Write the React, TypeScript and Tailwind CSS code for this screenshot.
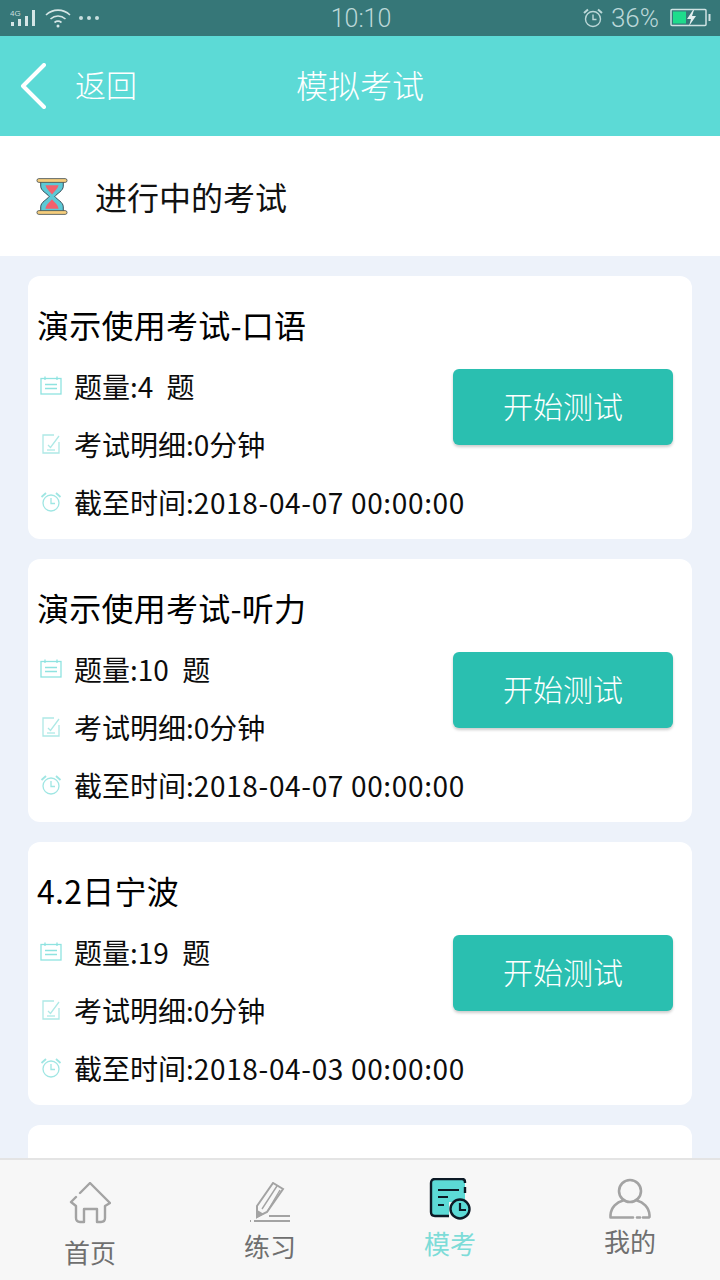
import React from 'react'

const exams = [
  { title: '演示使用考试-口语', count: 4, deadline: '2018-04-07 00:00:00' },
  { title: '演示使用考试-听力', count: 10, deadline: '2018-04-07 00:00:00' },
  { title: '4.2日宁波', count: 19, deadline: '2018-04-03 00:00:00' },
]

function StatusBar() {
  return (
    <div className="h-[36px] shrink-0 bg-[#367778] flex items-center justify-between pl-[10px] pr-[8px] text-[#bcd8d8]">
      <div className="flex items-center w-[200px]">
        <svg width="26" height="20" viewBox="0 0 26 20">
          <text x="0" y="8" fontSize="8" fill="#c8dede" fontFamily="Liberation Sans">4G</text>
          <rect x="1" y="14" width="3" height="4" fill="#d5e6e6" />
          <rect x="8" y="11" width="3" height="7" fill="#d5e6e6" />
          <rect x="15" y="8" width="3" height="10" fill="#d5e6e6" />
          <rect x="22" y="2" width="3" height="16" fill="#d5e6e6" />
        </svg>
        <svg width="28" height="22" viewBox="0 0 28 22" fill="none" stroke="#d5e6e6" strokeWidth="1.6" className="ml-[8px]">
          <path d="M2 8c7-6.500 17-6.500 24 0" />
          <path d="M6.500 12c4.500-4 10.500-4 15 0" />
          <path d="M10.500 15.500c2-1.500 5-1.500 7 0" />
          <circle cx="14" cy="19" r="1.500" fill="#d5e6e6" stroke="none" />
        </svg>
        <div className="ml-[7px] flex gap-[4px]">
          <span className="w-[4px] h-[4px] rounded-full bg-[#c8dede]" />
          <span className="w-[4px] h-[4px] rounded-full bg-[#c8dede]" />
          <span className="w-[4px] h-[4px] rounded-full bg-[#c8dede]" />
        </div>
      </div>
      <span className="text-[25px] leading-none font-['Roboto',sans-serif] font-light">10:10</span>
      <div className="w-[200px] flex items-center justify-end">
        <svg width="22" height="22" viewBox="0 0 22 22" fill="none" stroke="#bcd8d8" strokeWidth="1.4">
          <circle cx="11" cy="12" r="7.500" />
          <path d="M11 7.500V12.500H14.500" />
          <path d="M2 6l4-3.500M20 6l-4-3.500" strokeWidth="2" />
        </svg>
        <span className="ml-[7px] text-[26px] leading-none font-['Roboto',sans-serif] font-light">36%</span>
        <svg width="42" height="20" viewBox="0 0 42 20" className="ml-[11px]">
          <rect x="1" y="1.500" width="35" height="16" rx="1" fill="none" stroke="#cfe2e2" strokeWidth="1.500" />
          <rect x="3" y="3.500" width="13" height="12" fill="#1fdc8c" />
          <path d="M23 2l-6 9h4l-2 7 7-10h-4l2-6z" fill="#e4f0f0" />
          <rect x="38.500" y="6" width="2" height="7" fill="#cfe2e2" />
        </svg>
      </div>
    </div>
  )
}

function Header() {
  return (
    <div className="relative h-[100px] shrink-0 bg-[#5cdad6] flex items-center justify-center pb-[5px] text-white font-['Noto_Sans_CJK_SC',sans-serif]">
      <div className="absolute left-[20px] top-0 h-full pb-[1px] flex items-center">
        <svg width="26" height="46" viewBox="0 0 26 46" fill="none" stroke="white" strokeWidth="4" strokeLinecap="round" strokeLinejoin="round">
          <path d="M24 2L3 23L24 44" />
        </svg>
        <span className="ml-[29px] mb-[4px] text-[31px] font-light leading-none">返回</span>
      </div>
      <span className="text-[32px] font-light leading-none">模拟考试</span>
    </div>
  )
}

function Hourglass() {
  return (
    <svg width="32" height="39" viewBox="0 0 34 40">
      <path d="M5 4h24v5c0 5-7 8-9 11 2 3 9 6 9 11v5H5v-5c0-5 7-8 9-11-2-3-9-6-9-11z" fill="#5cc9d6" stroke="#33434f" strokeWidth="1" />
      <path d="M10 8h14c-1 4-5 7-7 10-2-3-6-6-7-10z" fill="#f2606c" />
      <path d="M17 23c2 3 6 5 7 10H10c1-5 5-7 7-10z" fill="#f2606c" />
      <rect x="1" y="1" width="32" height="4" rx="2" fill="#f6cd7c" stroke="#33434f" strokeWidth="0.800" />
      <rect x="1" y="35" width="32" height="4" rx="2" fill="#f6cd7c" stroke="#33434f" strokeWidth="0.800" />
    </svg>
  )
}

function ListIcon() {
  return (
    <svg width="22" height="20" viewBox="0 0 22 20" fill="none" stroke="#8fe3e0" strokeWidth="1.300">
      <rect x="1" y="2.500" width="20" height="15.500" />
      <path d="M5 0.500V4M17 0.500V4M5 8.500H17M5 12.500H17" />
    </svg>
  )
}

function EditIcon() {
  return (
    <svg width="22" height="22" viewBox="0 0 22 22" fill="none" stroke="#aee9e6" strokeWidth="1.300">
      <path d="M14 2H3V20H19V9" />
      <path d="M8 12l2.500 2.500L19 3" />
      <path d="M7 17H15" />
    </svg>
  )
}

function ClockIcon() {
  return (
    <svg width="22" height="22" viewBox="0 0 22 22" fill="none" stroke="#9fe6e3" strokeWidth="1.300">
      <circle cx="11" cy="12" r="8" />
      <path d="M11 7V12.500H15" />
      <path d="M1.500 6L6 2M20.500 6L16 2" strokeWidth="1.800" />
    </svg>
  )
}

function ExamCard({ title, count, deadline }: { title: string; count: number; deadline: string }) {
  return (
    <div className="h-[263px] shrink-0 bg-white rounded-[12px] pl-[10px] pr-[19px] pt-[28px] relative">
      <div className="text-[32px] leading-[40px] tracking-[0.25px] text-black -ml-[1px]">{title}</div>
      <div className="mt-[13px] flex items-center justify-between">
        <div className="flex flex-col text-[28px] leading-[58px] text-[#0c0c0c]">
          <div className="flex items-center">
            <span className="w-[36px] pl-[2px] flex items-center"><ListIcon /></span>
            <span className="[word-spacing:7px]">题量:{count} 题</span>
          </div>
          <div className="flex items-center">
            <span className="w-[36px] pl-[2px] flex items-center"><EditIcon /></span>
            <span>考试明细:0分钟</span>
          </div>
          <div className="flex items-center">
            <span className="w-[36px] pl-[2px] flex items-center"><ClockIcon /></span>
            <span>截至时间:<span className="tracking-[0.65px]">{deadline}</span></span>
          </div>
        </div>
      </div>
      {/* button sits over the right side of the rows */}
      <button className="absolute right-[19px] top-[93px] w-[220px] h-[76px] pb-[3px] rounded-[6px] bg-[#2abfb0] text-white text-[30px] font-light shadow-[0_2px_3px_rgba(0,0,0,0.2)]">
        开始测试
      </button>
    </div>
  )
}

function Tab({ label, icon, active, iconTop, textTop }: { label: string; icon: React.ReactNode; active?: boolean; iconTop: string; textTop: string }) {
  return (
    <div className={`flex-1 flex flex-col items-center ${iconTop}`}>
      <div className="h-[44px] flex items-center justify-center">{icon}</div>
      <span className={`text-[26px] leading-[34px] ${textTop} ${active ? 'text-[#7ddcd8]' : 'text-[#6f6f6f]'}`}>{label}</span>
    </div>
  )
}

export default function App() {
  return (
    <div className="w-[720px] h-[1280px] flex flex-col overflow-hidden bg-[#edf2fa] font-['Noto_Sans_CJK_SC','Noto_Sans',sans-serif]">
      <StatusBar />
      <Header />
      <div className="h-[120px] shrink-0 bg-white flex items-center pl-[36px]">
        <Hourglass />
        <span className="ml-[27px] text-[32px] leading-none text-[#111]">进行中的考试</span>
      </div>
      <div className="flex-1 min-h-0 overflow-hidden flex flex-col gap-[20px] pt-[20px] px-[28px]">
        {exams.map((e) => (
          <ExamCard key={e.title} {...e} />
        ))}
        <div className="h-[263px] shrink-0 bg-white rounded-[12px]" />
      </div>
      <div className="h-[122px] shrink-0 bg-[#f7f7f7] border-t-2 border-[#e4e4e4] flex">
        <Tab
          label="首页"
          iconTop="pt-[21px]"
          textTop="mt-[10px]"
          icon={
            <svg width="42" height="42" viewBox="0 0 42 42" fill="none" stroke="#a3a3a3" strokeWidth="2.400" strokeLinejoin="round" strokeLinecap="round">
              <path d="M11 11L21 1L41 21L36 24V36Q36 40 32 40H28V27H15V40H11Q7 40 7 36V24L2 20L7 15" />
            </svg>
          }
        />
        <Tab
          label="练习"
          iconTop="pt-[21px]"
          textTop="mt-[4px]"
          icon={
            <svg width="42" height="42" viewBox="0 0 42 42" fill="none" stroke="#a3a3a3" strokeWidth="2">
              <path d="M8 35L8 24L24 1L34 7L18 30Z" />
              <path d="M13 27L28 4M18 30L31 8" strokeWidth="1.400" />
              <path d="M8 35L8 29L13 32Z" fill="#a3a3a3" />
              <path d="M20 34H41M1 39H2M5 39H41" strokeWidth="2" />
            </svg>
          }
        />
        <Tab
          label="模考"
          active
          iconTop="pt-[17px]"
          textTop="mt-[5px]"
          icon={
            <svg width="42" height="42" viewBox="0 0 42 42" fill="none" stroke="#0d1a26" strokeWidth="2.400">
              <path d="M2 5Q2 1 6 1H33Q36 1 36 4V24H20V38H6Q2 38 2 34Z" fill="#5cdad6" stroke="none" />
              <path d="M2 5Q2 1 6 1H33Q36 1 36 4V5M36 9V15M2 5V34Q2 38 6 38H20" />
              <path d="M9 12H30M9 19H19M9 27H15" strokeWidth="2" />
              <circle cx="31" cy="31" r="9.500" fill="#5cdad6" />
              <path d="M31 25V32H37" strokeWidth="2.200" />
            </svg>
          }
        />
        <Tab
          label="我的"
          iconTop="pt-[17px]"
          textTop="mt-[3px]"
          icon={
            <svg width="42" height="42" viewBox="0 0 42 42" fill="none" stroke="#a3a3a3" strokeWidth="2.600" strokeLinecap="round">
              <circle cx="21" cy="13" r="11" />
              <path d="M1.500 39V37C2 29 8 24 14 22.500M28 22.500C34 24 40 29 40.500 37V39M1.500 39.500H24M28 39.500H31M34 39.500H40" />
            </svg>
          }
        />
      </div>
    </div>
  )
}
